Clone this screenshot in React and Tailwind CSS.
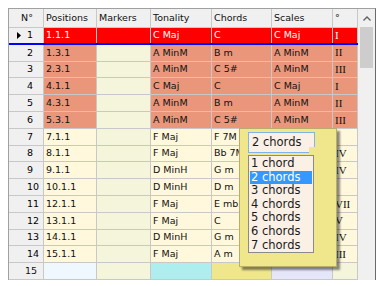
import React from 'react';

// Scales of rows 7-14 sit under the popup in the picture, so they are left empty
const rows = [
  { n: 1, pos: '1.1.1', ton: 'C Maj', chord: 'C', scale: 'C Maj', deg: 'I', kind: 'sel' },
  { n: 2, pos: '1.3.1', ton: 'A MinM', chord: 'B m', scale: 'A MinM', deg: 'II', kind: 'hot' },
  { n: 3, pos: '2.3.1', ton: 'A MinM', chord: 'C 5#', scale: 'A MinM', deg: 'III', kind: 'hot' },
  { n: 4, pos: '4.1.1', ton: 'C Maj', chord: 'C', scale: 'C Maj', deg: 'I', kind: 'hot' },
  { n: 5, pos: '4.3.1', ton: 'A MinM', chord: 'B m', scale: 'A MinM', deg: 'II', kind: 'hot' },
  { n: 6, pos: '5.3.1', ton: 'A MinM', chord: 'C 5#', scale: 'A MinM', deg: 'III', kind: 'hot' },
  { n: 7, pos: '7.1.1', ton: 'F Maj', chord: 'F 7M', scale: '', deg: '', kind: 'cold' },
  { n: 8, pos: '8.1.1', ton: 'F Maj', chord: 'Bb 7M', scale: '', deg: 'IV', kind: 'cold' },
  { n: 9, pos: '9.1.1', ton: 'D MinH', chord: 'G m', scale: '', deg: 'IV', kind: 'cold' },
  { n: 10, pos: '10.1.1', ton: 'D MinH', chord: 'D m', scale: '', deg: '', kind: 'cold' },
  { n: 11, pos: '12.1.1', ton: 'F Maj', chord: 'E mb5', scale: '', deg: 'VII', kind: 'cold' },
  { n: 12, pos: '13.1.1', ton: 'F Maj', chord: 'C', scale: '', deg: 'V', kind: 'cold' },
  { n: 13, pos: '14.1.1', ton: 'D MinH', chord: 'G m', scale: '', deg: 'IV', kind: 'cold' },
  { n: 14, pos: '15.1.1', ton: 'F Maj', chord: 'A m', scale: '', deg: 'III', kind: 'cold' },
];

const options = ['1 chord', '2 chords', '3 chords', '4 chords', '5 chords', '6 chords', '7 chords'];

const Cell = ({ className, children }) => (
  <div className={`h-full border-r border-[#c8c8c8] pl-[2px] flex items-center whitespace-nowrap overflow-hidden ${className}`}>
    {children}
  </div>
);

const Row = ({ r }) => {
  const bg = r.kind === 'sel' ? 'bg-[#ff0000] text-white' : r.kind === 'hot' ? 'bg-[#e9967a]' : 'bg-[#fff8dc]';
  const mk = r.kind === 'sel' ? 'bg-[#ff0000]' : 'bg-[#f5f5dc]';
  const line = r.kind === 'sel'
    ? 'border-b-2 border-[#0000ff] shadow-[inset_0_1px_0_#f47a6a]'
    : 'border-b border-[#c8c8c8]';
  return (
    <div className={`flex h-[16.8px] ${line}`}>
      <Cell className="w-[35px] bg-[#f0f0f0] pl-0">
        <span className="w-[16px] flex justify-center">
          {r.kind === 'sel' && (
            <svg width="4" height="7" viewBox="0 0 4 7"><path d="M0 0 L4 3.5 L0 7 Z" fill="#000" /></svg>
          )}
        </span>
        <span className="text-black">{r.n}</span>
      </Cell>
      <Cell className={`w-[53px] ${bg}`}>{r.pos}</Cell>
      <Cell className={`w-[54px] ${mk}`} />
      <Cell className={`w-[61px] ${bg}`}>{r.ton}</Cell>
      <Cell className={`w-[60px] ${bg}`}>{r.chord}</Cell>
      <Cell className={`w-[61px] ${bg}`}>{r.scale}</Cell>
      <Cell className={`w-[25px] ${bg} font-['Liberation_Serif',serif] text-[11px]`}>{r.deg}</Cell>
    </div>
  );
};

export default function App() {
  return (
    <div className="w-[379px] h-[286px] bg-white pl-[8px] pt-[8px] font-['DejaVu_Sans',sans-serif] text-[9.5px] text-[#111]">
      <div className="relative w-[368px] h-[272px] border-t border-l border-r border-t-[#a0a0a0] border-l-[#a0a0a0] border-r-[#6a6a6a] flex">
        <div className="w-[349px] flex flex-col">
          <div className="flex h-[19px] border-b border-[#c8c8c8] bg-[#f0f0f0]">
            <Cell className="w-[35px] justify-center pl-0">N°</Cell>
            <Cell className="w-[53px]">Positions</Cell>
            <Cell className="w-[54px]">Markers</Cell>
            <Cell className="w-[61px]">Tonality</Cell>
            <Cell className="w-[60px]">Chords</Cell>
            <Cell className="w-[61px]">Scales</Cell>
            <Cell className="w-[25px]">°</Cell>
          </div>
          {rows.map((r) => (
            <Row key={r.n} r={r} />
          ))}
          <div className="flex h-[16.8px] border-b border-[#c8c8c8]">
            <Cell className="w-[35px] bg-[#f0f0f0] pl-[16px]">15</Cell>
            <Cell className="w-[53px] bg-[#f0f8ff]" />
            <Cell className="w-[54px] bg-[#f5f5dc]" />
            <Cell className="w-[61px] bg-[#afeeee]" />
            <Cell className="w-[60px] bg-[#f0e68c]" />
            <Cell className="w-[61px] bg-[#e6e6fa]" />
            <Cell className="w-[25px] bg-[#f5f5dc]" />
          </div>
        </div>

        <div className="w-[17px] bg-[#f0f0f0] flex flex-col items-center">
          <div className="h-[18px] w-full flex items-center justify-center">
            <svg width="8" height="5" viewBox="0 0 8 5"><path d="M0.5 4.5 L4 1 L7.5 4.5" stroke="#606060" strokeWidth="1.3" fill="none" /></svg>
          </div>
          <div className="w-[13px] h-[41px] bg-[#cdcdcd]" />
        </div>

        <div className="absolute left-[230px] top-[119px] w-[98px] h-[139px] bg-[#f0e68c] border border-[#b8ad6a] shadow-[3px_3px_2px_rgba(0,0,0,0.45)] px-[8px] pt-[3px]">
          <div className="relative h-[21px] w-[67px] bg-[#faf0e6] border border-[#7eb4ea] flex items-center pl-[3px] text-[11.5px] text-[#1a1a1a]">
            2 chords
            <div className="absolute right-[-1px] bottom-[-1px] w-[6px] h-[6px] bg-[#f0e68c]" />
          </div>
          <div className="mt-[2px] w-[66px] h-[98px] bg-[#faf0e6] border border-[#8a8a8a] p-[1px] text-[11.5px] text-[#1a1a1a]">
            {options.map((o) => (
              <div
                key={o}
                className={`h-[13.6px] flex items-center pl-[1px] leading-none ${o === '2 chords' ? 'bg-[#3399ff] text-white' : ''}`}
              >
                {o}
              </div>
            ))}
          </div>
        </div>
      </div>
    </div>
  );
}
